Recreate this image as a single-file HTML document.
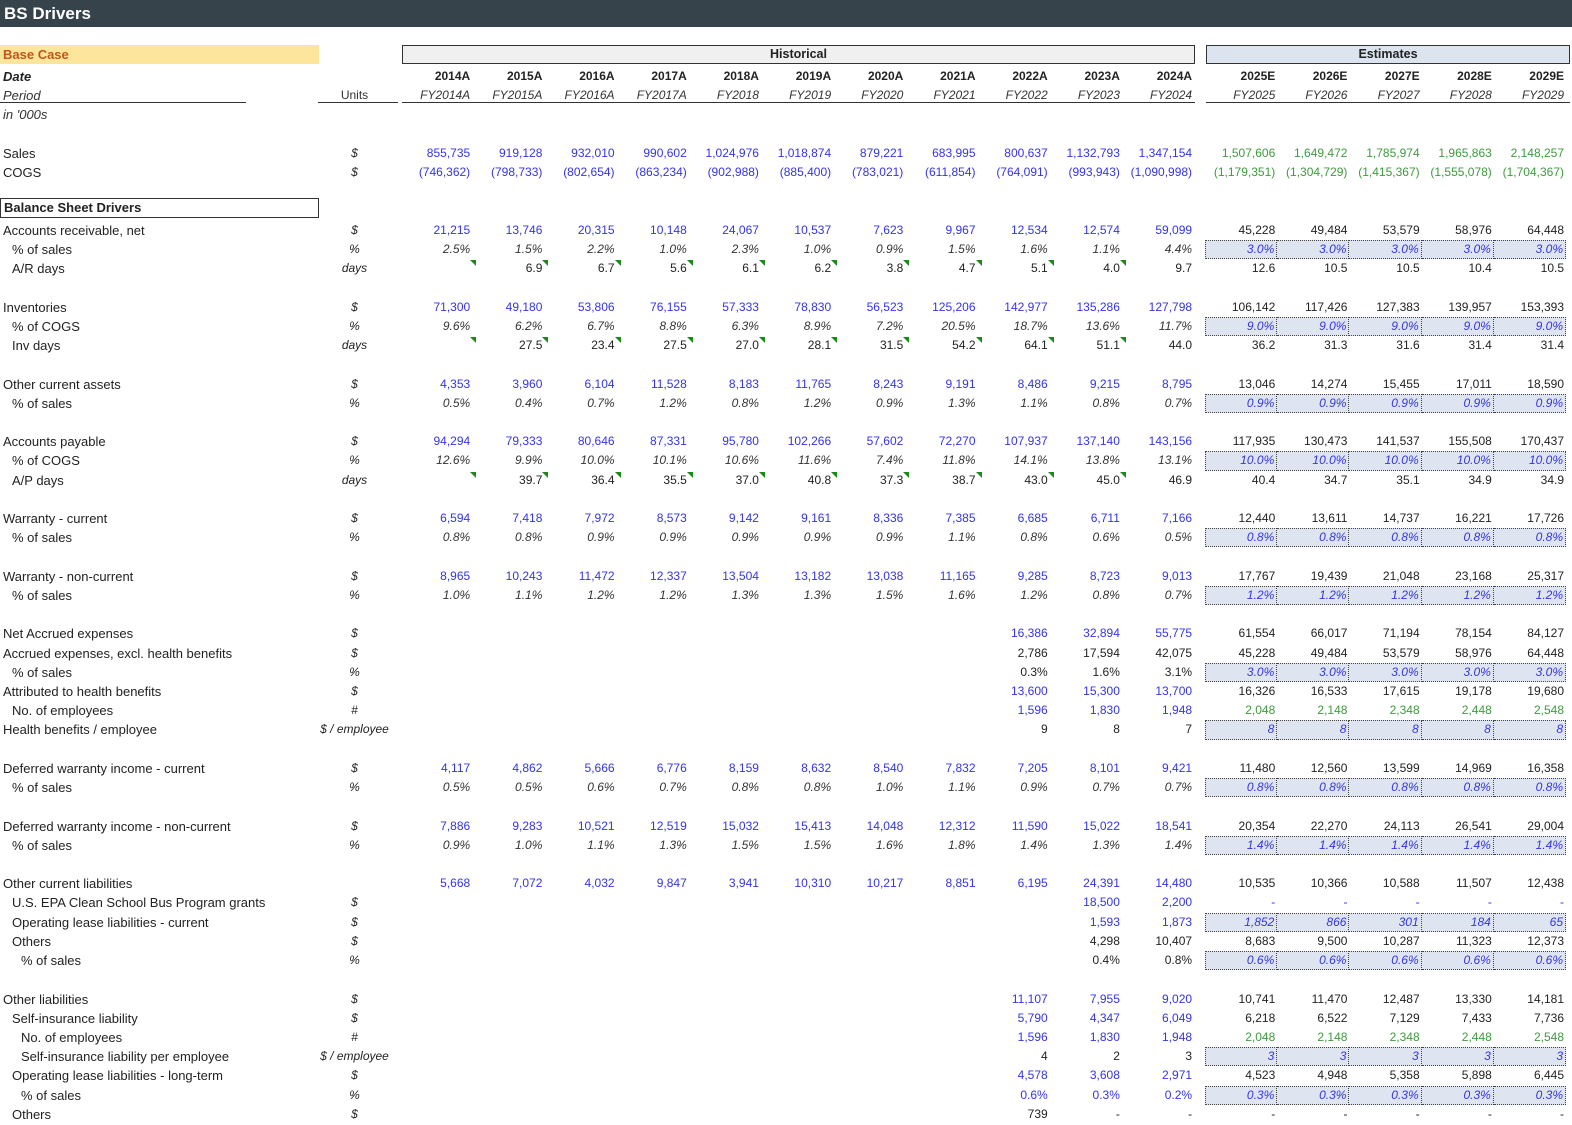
<!DOCTYPE html>
<html><head><meta charset="utf-8"><style>
*{margin:0;padding:0;box-sizing:border-box}
body{width:1572px;height:1125px;background:#fff;font-family:"Liberation Sans",sans-serif;font-size:12px;color:#222;position:relative;overflow:hidden}
.t{position:absolute;left:0;top:0;width:1572px;height:27px;background:#36434a;color:#fff;font-weight:bold;font-size:17px;line-height:27px;padding-left:4px}
.r{position:absolute;left:0;width:1572px;height:19.22px;line-height:19.22px;display:flex;white-space:nowrap;margin-top:2.5px}
.r>span{flex:none}
.l{width:309px;padding-left:3px;font-size:13px}
.l1{padding-left:12px}.l2{padding-left:21px}
.u{width:91px;text-align:center;font-style:italic}
.n{width:72.2px;text-align:right;padding-right:2px;position:relative}
.sp{width:11px}
.b{color:#3434e6}.g{color:#3f9a3f}.i{font-style:italic;color:#333}
.k{background:#dee5f0;border:1px dotted #444;border-left:none;font-style:italic;color:#3434e6;line-height:17px}
.k0{border-left:1px dotted #444}
.tr::after{content:"";position:absolute;right:-4px;top:1px;border-top:6px solid #1a8a1a;border-left:6px solid transparent}
.box{position:absolute;height:19px;border:1.5px solid #333;font-weight:bold;text-align:center;line-height:17px;font-size:12.5px}
.ul{position:absolute;height:1.5px;background:#333;top:101.5px}
</style></head><body>
<div class="t">BS Drivers</div>
<div style="position:absolute;left:0;top:45px;width:319px;height:19px;background:#fde59c;color:#c2561a;font-weight:bold;font-size:13px;line-height:20px;padding-left:3px">Base Case</div>
<div class="box" style="left:402px;top:45px;width:793px;background:#f0f0f0">Historical</div>
<div class="box" style="left:1206px;top:45px;width:364px;background:#dce4ef">Estimates</div>
<div class="ul" style="left:0;width:246px"></div>
<div class="ul" style="left:318px;width:80px"></div>
<div class="ul" style="left:402px;width:793px"></div>
<div class="ul" style="left:1206px;width:364px"></div>
<div class="box" style="left:0;top:198px;width:319px;height:20px;text-align:left;padding-left:3px;line-height:18px;font-size:13px">Balance Sheet Drivers</div>

<div class="r" style="top:64.4px;font-weight:bold"><span class="l" style="font-style:italic">Date</span><span class="u"></span><span class="n">2014A</span><span class="n">2015A</span><span class="n">2016A</span><span class="n">2017A</span><span class="n">2018A</span><span class="n">2019A</span><span class="n">2020A</span><span class="n">2021A</span><span class="n">2022A</span><span class="n">2023A</span><span class="n">2024A</span><span class="sp"></span><span class="n">2025E</span><span class="n">2026E</span><span class="n">2027E</span><span class="n">2028E</span><span class="n">2029E</span></div>
<div class="r i" style="top:83.6px"><span class="l">Period</span><span class="u" style="font-style:normal">Units</span><span class="n">FY2014A</span><span class="n">FY2015A</span><span class="n">FY2016A</span><span class="n">FY2017A</span><span class="n">FY2018</span><span class="n">FY2019</span><span class="n">FY2020</span><span class="n">FY2021</span><span class="n">FY2022</span><span class="n">FY2023</span><span class="n">FY2024</span><span class="sp"></span><span class="n">FY2025</span><span class="n">FY2026</span><span class="n">FY2027</span><span class="n">FY2028</span><span class="n">FY2029</span></div>
<div class="r i" style="top:102.8px"><span class="l">in '000s</span></div>

<div class="r" style="top:141.3px"><span class="l">Sales</span><span class="u">$</span><span class="n b">855,735</span><span class="n b">919,128</span><span class="n b">932,010</span><span class="n b">990,602</span><span class="n b">1,024,976</span><span class="n b">1,018,874</span><span class="n b">879,221</span><span class="n b">683,995</span><span class="n b">800,637</span><span class="n b">1,132,793</span><span class="n b">1,347,154</span><span class="sp"></span><span class="n g">1,507,606</span><span class="n g">1,649,472</span><span class="n g">1,785,974</span><span class="n g">1,965,863</span><span class="n g">2,148,257</span></div>
<div class="r" style="top:160.5px"><span class="l">COGS</span><span class="u">$</span><span class="n b">(746,362)</span><span class="n b">(798,733)</span><span class="n b">(802,654)</span><span class="n b">(863,234)</span><span class="n b">(902,988)</span><span class="n b">(885,400)</span><span class="n b">(783,021)</span><span class="n b">(611,854)</span><span class="n b">(764,091)</span><span class="n b">(993,943)</span><span class="n b">(1,090,998)</span><span class="sp"></span><span class="n g">(1,179,351)</span><span class="n g">(1,304,729)</span><span class="n g">(1,415,367)</span><span class="n g">(1,555,078)</span><span class="n g">(1,704,367)</span></div>

<div class="r" style="top:218.2px"><span class="l">Accounts receivable, net</span><span class="u">$</span><span class="n b">21,215</span><span class="n b">13,746</span><span class="n b">20,315</span><span class="n b">10,148</span><span class="n b">24,067</span><span class="n b">10,537</span><span class="n b">7,623</span><span class="n b">9,967</span><span class="n b">12,534</span><span class="n b">12,574</span><span class="n b">59,099</span><span class="sp"></span><span class="n">45,228</span><span class="n">49,484</span><span class="n">53,579</span><span class="n">58,976</span><span class="n">64,448</span></div>
<div class="r" style="top:237.4px"><span class="l l1">% of sales</span><span class="u">%</span><span class="n i">2.5%</span><span class="n i">1.5%</span><span class="n i">2.2%</span><span class="n i">1.0%</span><span class="n i">2.3%</span><span class="n i">1.0%</span><span class="n i">0.9%</span><span class="n i">1.5%</span><span class="n i">1.6%</span><span class="n i">1.1%</span><span class="n i">4.4%</span><span class="sp"></span><span class="n k k0">3.0%</span><span class="n k">3.0%</span><span class="n k">3.0%</span><span class="n k">3.0%</span><span class="n k">3.0%</span></div>
<div class="r" style="top:256.6px"><span class="l l1">A/R days</span><span class="u">days</span><span class="n tr"></span><span class="n tr">6.9</span><span class="n tr">6.7</span><span class="n tr">5.6</span><span class="n tr">6.1</span><span class="n tr">6.2</span><span class="n tr">3.8</span><span class="n tr">4.7</span><span class="n tr">5.1</span><span class="n tr">4.0</span><span class="n">9.7</span><span class="sp"></span><span class="n">12.6</span><span class="n">10.5</span><span class="n">10.5</span><span class="n">10.4</span><span class="n">10.5</span></div>

<div class="r" style="top:295.1px"><span class="l">Inventories</span><span class="u">$</span><span class="n b">71,300</span><span class="n b">49,180</span><span class="n b">53,806</span><span class="n b">76,155</span><span class="n b">57,333</span><span class="n b">78,830</span><span class="n b">56,523</span><span class="n b">125,206</span><span class="n b">142,977</span><span class="n b">135,286</span><span class="n b">127,798</span><span class="sp"></span><span class="n">106,142</span><span class="n">117,426</span><span class="n">127,383</span><span class="n">139,957</span><span class="n">153,393</span></div>
<div class="r" style="top:314.3px"><span class="l l1">% of COGS</span><span class="u">%</span><span class="n i">9.6%</span><span class="n i">6.2%</span><span class="n i">6.7%</span><span class="n i">8.8%</span><span class="n i">6.3%</span><span class="n i">8.9%</span><span class="n i">7.2%</span><span class="n i">20.5%</span><span class="n i">18.7%</span><span class="n i">13.6%</span><span class="n i">11.7%</span><span class="sp"></span><span class="n k k0">9.0%</span><span class="n k">9.0%</span><span class="n k">9.0%</span><span class="n k">9.0%</span><span class="n k">9.0%</span></div>
<div class="r" style="top:333.5px"><span class="l l1">Inv days</span><span class="u">days</span><span class="n tr"></span><span class="n tr">27.5</span><span class="n tr">23.4</span><span class="n tr">27.5</span><span class="n tr">27.0</span><span class="n tr">28.1</span><span class="n tr">31.5</span><span class="n tr">54.2</span><span class="n tr">64.1</span><span class="n tr">51.1</span><span class="n">44.0</span><span class="sp"></span><span class="n">36.2</span><span class="n">31.3</span><span class="n">31.6</span><span class="n">31.4</span><span class="n">31.4</span></div>

<div class="r" style="top:372px"><span class="l">Other current assets</span><span class="u">$</span><span class="n b">4,353</span><span class="n b">3,960</span><span class="n b">6,104</span><span class="n b">11,528</span><span class="n b">8,183</span><span class="n b">11,765</span><span class="n b">8,243</span><span class="n b">9,191</span><span class="n b">8,486</span><span class="n b">9,215</span><span class="n b">8,795</span><span class="sp"></span><span class="n">13,046</span><span class="n">14,274</span><span class="n">15,455</span><span class="n">17,011</span><span class="n">18,590</span></div>
<div class="r" style="top:391.2px"><span class="l l1">% of sales</span><span class="u">%</span><span class="n i">0.5%</span><span class="n i">0.4%</span><span class="n i">0.7%</span><span class="n i">1.2%</span><span class="n i">0.8%</span><span class="n i">1.2%</span><span class="n i">0.9%</span><span class="n i">1.3%</span><span class="n i">1.1%</span><span class="n i">0.8%</span><span class="n i">0.7%</span><span class="sp"></span><span class="n k k0">0.9%</span><span class="n k">0.9%</span><span class="n k">0.9%</span><span class="n k">0.9%</span><span class="n k">0.9%</span></div>

<div class="r" style="top:429.6px"><span class="l">Accounts payable</span><span class="u">$</span><span class="n b">94,294</span><span class="n b">79,333</span><span class="n b">80,646</span><span class="n b">87,331</span><span class="n b">95,780</span><span class="n b">102,266</span><span class="n b">57,602</span><span class="n b">72,270</span><span class="n b">107,937</span><span class="n b">137,140</span><span class="n b">143,156</span><span class="sp"></span><span class="n">117,935</span><span class="n">130,473</span><span class="n">141,537</span><span class="n">155,508</span><span class="n">170,437</span></div>
<div class="r" style="top:448.8px"><span class="l l1">% of COGS</span><span class="u">%</span><span class="n i">12.6%</span><span class="n i">9.9%</span><span class="n i">10.0%</span><span class="n i">10.1%</span><span class="n i">10.6%</span><span class="n i">11.6%</span><span class="n i">7.4%</span><span class="n i">11.8%</span><span class="n i">14.1%</span><span class="n i">13.8%</span><span class="n i">13.1%</span><span class="sp"></span><span class="n k k0">10.0%</span><span class="n k">10.0%</span><span class="n k">10.0%</span><span class="n k">10.0%</span><span class="n k">10.0%</span></div>
<div class="r" style="top:468px"><span class="l l1">A/P days</span><span class="u">days</span><span class="n tr"></span><span class="n tr">39.7</span><span class="n tr">36.4</span><span class="n tr">35.5</span><span class="n tr">37.0</span><span class="n tr">40.8</span><span class="n tr">37.3</span><span class="n tr">38.7</span><span class="n tr">43.0</span><span class="n tr">45.0</span><span class="n">46.9</span><span class="sp"></span><span class="n">40.4</span><span class="n">34.7</span><span class="n">35.1</span><span class="n">34.9</span><span class="n">34.9</span></div>

<div class="r" style="top:506.5px"><span class="l">Warranty  - current</span><span class="u">$</span><span class="n b">6,594</span><span class="n b">7,418</span><span class="n b">7,972</span><span class="n b">8,573</span><span class="n b">9,142</span><span class="n b">9,161</span><span class="n b">8,336</span><span class="n b">7,385</span><span class="n b">6,685</span><span class="n b">6,711</span><span class="n b">7,166</span><span class="sp"></span><span class="n">12,440</span><span class="n">13,611</span><span class="n">14,737</span><span class="n">16,221</span><span class="n">17,726</span></div>
<div class="r" style="top:525.7px"><span class="l l1">% of sales</span><span class="u">%</span><span class="n i">0.8%</span><span class="n i">0.8%</span><span class="n i">0.9%</span><span class="n i">0.9%</span><span class="n i">0.9%</span><span class="n i">0.9%</span><span class="n i">0.9%</span><span class="n i">1.1%</span><span class="n i">0.8%</span><span class="n i">0.6%</span><span class="n i">0.5%</span><span class="sp"></span><span class="n k k0">0.8%</span><span class="n k">0.8%</span><span class="n k">0.8%</span><span class="n k">0.8%</span><span class="n k">0.8%</span></div>

<div class="r" style="top:564.2px"><span class="l">Warranty  - non-current</span><span class="u">$</span><span class="n b">8,965</span><span class="n b">10,243</span><span class="n b">11,472</span><span class="n b">12,337</span><span class="n b">13,504</span><span class="n b">13,182</span><span class="n b">13,038</span><span class="n b">11,165</span><span class="n b">9,285</span><span class="n b">8,723</span><span class="n b">9,013</span><span class="sp"></span><span class="n">17,767</span><span class="n">19,439</span><span class="n">21,048</span><span class="n">23,168</span><span class="n">25,317</span></div>
<div class="r" style="top:583.4px"><span class="l l1">% of sales</span><span class="u">%</span><span class="n i">1.0%</span><span class="n i">1.1%</span><span class="n i">1.2%</span><span class="n i">1.2%</span><span class="n i">1.3%</span><span class="n i">1.3%</span><span class="n i">1.5%</span><span class="n i">1.6%</span><span class="n i">1.2%</span><span class="n i">0.8%</span><span class="n i">0.7%</span><span class="sp"></span><span class="n k k0">1.2%</span><span class="n k">1.2%</span><span class="n k">1.2%</span><span class="n k">1.2%</span><span class="n k">1.2%</span></div>

<div class="r" style="top:621.8px"><span class="l">Net Accrued expenses</span><span class="u">$</span><span class="n"></span><span class="n"></span><span class="n"></span><span class="n"></span><span class="n"></span><span class="n"></span><span class="n"></span><span class="n"></span><span class="n b">16,386</span><span class="n b">32,894</span><span class="n b">55,775</span><span class="sp"></span><span class="n">61,554</span><span class="n">66,017</span><span class="n">71,194</span><span class="n">78,154</span><span class="n">84,127</span></div>
<div class="r" style="top:641px"><span class="l">Accrued expenses, excl. health benefits</span><span class="u">$</span><span class="n"></span><span class="n"></span><span class="n"></span><span class="n"></span><span class="n"></span><span class="n"></span><span class="n"></span><span class="n"></span><span class="n">2,786</span><span class="n">17,594</span><span class="n">42,075</span><span class="sp"></span><span class="n">45,228</span><span class="n">49,484</span><span class="n">53,579</span><span class="n">58,976</span><span class="n">64,448</span></div>
<div class="r" style="top:660.2px"><span class="l l1">% of sales</span><span class="u">%</span><span class="n"></span><span class="n"></span><span class="n"></span><span class="n"></span><span class="n"></span><span class="n"></span><span class="n"></span><span class="n"></span><span class="n">0.3%</span><span class="n">1.6%</span><span class="n">3.1%</span><span class="sp"></span><span class="n k k0">3.0%</span><span class="n k">3.0%</span><span class="n k">3.0%</span><span class="n k">3.0%</span><span class="n k">3.0%</span></div>
<div class="r" style="top:679.5px"><span class="l">Attributed to health benefits</span><span class="u">$</span><span class="n"></span><span class="n"></span><span class="n"></span><span class="n"></span><span class="n"></span><span class="n"></span><span class="n"></span><span class="n"></span><span class="n b">13,600</span><span class="n b">15,300</span><span class="n b">13,700</span><span class="sp"></span><span class="n">16,326</span><span class="n">16,533</span><span class="n">17,615</span><span class="n">19,178</span><span class="n">19,680</span></div>
<div class="r" style="top:698.7px"><span class="l l1">No. of employees</span><span class="u">#</span><span class="n"></span><span class="n"></span><span class="n"></span><span class="n"></span><span class="n"></span><span class="n"></span><span class="n"></span><span class="n"></span><span class="n b">1,596</span><span class="n b">1,830</span><span class="n b">1,948</span><span class="sp"></span><span class="n g">2,048</span><span class="n g">2,148</span><span class="n g">2,348</span><span class="n g">2,448</span><span class="n g">2,548</span></div>
<div class="r" style="top:717.9px"><span class="l">Health benefits / employee</span><span class="u">$ / employee</span><span class="n"></span><span class="n"></span><span class="n"></span><span class="n"></span><span class="n"></span><span class="n"></span><span class="n"></span><span class="n"></span><span class="n">9</span><span class="n">8</span><span class="n">7</span><span class="sp"></span><span class="n k k0">8</span><span class="n k">8</span><span class="n k">8</span><span class="n k">8</span><span class="n k">8</span></div>

<div class="r" style="top:756.3px"><span class="l">Deferred warranty income - current</span><span class="u">$</span><span class="n b">4,117</span><span class="n b">4,862</span><span class="n b">5,666</span><span class="n b">6,776</span><span class="n b">8,159</span><span class="n b">8,632</span><span class="n b">8,540</span><span class="n b">7,832</span><span class="n b">7,205</span><span class="n b">8,101</span><span class="n b">9,421</span><span class="sp"></span><span class="n">11,480</span><span class="n">12,560</span><span class="n">13,599</span><span class="n">14,969</span><span class="n">16,358</span></div>
<div class="r" style="top:775.5px"><span class="l l1">% of sales</span><span class="u">%</span><span class="n i">0.5%</span><span class="n i">0.5%</span><span class="n i">0.6%</span><span class="n i">0.7%</span><span class="n i">0.8%</span><span class="n i">0.8%</span><span class="n i">1.0%</span><span class="n i">1.1%</span><span class="n i">0.9%</span><span class="n i">0.7%</span><span class="n i">0.7%</span><span class="sp"></span><span class="n k k0">0.8%</span><span class="n k">0.8%</span><span class="n k">0.8%</span><span class="n k">0.8%</span><span class="n k">0.8%</span></div>

<div class="r" style="top:814px"><span class="l">Deferred warranty income - non-current</span><span class="u">$</span><span class="n b">7,886</span><span class="n b">9,283</span><span class="n b">10,521</span><span class="n b">12,519</span><span class="n b">15,032</span><span class="n b">15,413</span><span class="n b">14,048</span><span class="n b">12,312</span><span class="n b">11,590</span><span class="n b">15,022</span><span class="n b">18,541</span><span class="sp"></span><span class="n">20,354</span><span class="n">22,270</span><span class="n">24,113</span><span class="n">26,541</span><span class="n">29,004</span></div>
<div class="r" style="top:833.2px"><span class="l l1">% of sales</span><span class="u">%</span><span class="n i">0.9%</span><span class="n i">1.0%</span><span class="n i">1.1%</span><span class="n i">1.3%</span><span class="n i">1.5%</span><span class="n i">1.5%</span><span class="n i">1.6%</span><span class="n i">1.8%</span><span class="n i">1.4%</span><span class="n i">1.3%</span><span class="n i">1.4%</span><span class="sp"></span><span class="n k k0">1.4%</span><span class="n k">1.4%</span><span class="n k">1.4%</span><span class="n k">1.4%</span><span class="n k">1.4%</span></div>

<div class="r" style="top:871.7px"><span class="l">Other current liabilities</span><span class="u"></span><span class="n b">5,668</span><span class="n b">7,072</span><span class="n b">4,032</span><span class="n b">9,847</span><span class="n b">3,941</span><span class="n b">10,310</span><span class="n b">10,217</span><span class="n b">8,851</span><span class="n b">6,195</span><span class="n b">24,391</span><span class="n b">14,480</span><span class="sp"></span><span class="n">10,535</span><span class="n">10,366</span><span class="n">10,588</span><span class="n">11,507</span><span class="n">12,438</span></div>
<div class="r" style="top:890.9px"><span class="l l1">U.S. EPA Clean School Bus Program grants</span><span class="u">$</span><span class="n"></span><span class="n"></span><span class="n"></span><span class="n"></span><span class="n"></span><span class="n"></span><span class="n"></span><span class="n"></span><span class="n"></span><span class="n b">18,500</span><span class="n b">2,200</span><span class="sp"></span><span class="n b">-</span><span class="n b">-</span><span class="n b">-</span><span class="n b">-</span><span class="n b">-</span></div>
<div class="r" style="top:910.1px"><span class="l l1">Operating lease liabilities - current</span><span class="u">$</span><span class="n"></span><span class="n"></span><span class="n"></span><span class="n"></span><span class="n"></span><span class="n"></span><span class="n"></span><span class="n"></span><span class="n"></span><span class="n b">1,593</span><span class="n b">1,873</span><span class="sp"></span><span class="n k k0">1,852</span><span class="n k">866</span><span class="n k">301</span><span class="n k">184</span><span class="n k">65</span></div>
<div class="r" style="top:929.3px"><span class="l l1">Others</span><span class="u">$</span><span class="n"></span><span class="n"></span><span class="n"></span><span class="n"></span><span class="n"></span><span class="n"></span><span class="n"></span><span class="n"></span><span class="n"></span><span class="n">4,298</span><span class="n">10,407</span><span class="sp"></span><span class="n">8,683</span><span class="n">9,500</span><span class="n">10,287</span><span class="n">11,323</span><span class="n">12,373</span></div>
<div class="r" style="top:948.5px"><span class="l l2">% of sales</span><span class="u">%</span><span class="n"></span><span class="n"></span><span class="n"></span><span class="n"></span><span class="n"></span><span class="n"></span><span class="n"></span><span class="n"></span><span class="n"></span><span class="n">0.4%</span><span class="n">0.8%</span><span class="sp"></span><span class="n k k0">0.6%</span><span class="n k">0.6%</span><span class="n k">0.6%</span><span class="n k">0.6%</span><span class="n k">0.6%</span></div>

<div class="r" style="top:987px"><span class="l">Other liabilities</span><span class="u">$</span><span class="n"></span><span class="n"></span><span class="n"></span><span class="n"></span><span class="n"></span><span class="n"></span><span class="n"></span><span class="n"></span><span class="n b">11,107</span><span class="n b">7,955</span><span class="n b">9,020</span><span class="sp"></span><span class="n">10,741</span><span class="n">11,470</span><span class="n">12,487</span><span class="n">13,330</span><span class="n">14,181</span></div>
<div class="r" style="top:1006.2px"><span class="l l1">Self-insurance liability</span><span class="u">$</span><span class="n"></span><span class="n"></span><span class="n"></span><span class="n"></span><span class="n"></span><span class="n"></span><span class="n"></span><span class="n"></span><span class="n b">5,790</span><span class="n b">4,347</span><span class="n b">6,049</span><span class="sp"></span><span class="n">6,218</span><span class="n">6,522</span><span class="n">7,129</span><span class="n">7,433</span><span class="n">7,736</span></div>
<div class="r" style="top:1025.4px"><span class="l l2">No. of employees</span><span class="u">#</span><span class="n"></span><span class="n"></span><span class="n"></span><span class="n"></span><span class="n"></span><span class="n"></span><span class="n"></span><span class="n"></span><span class="n b">1,596</span><span class="n b">1,830</span><span class="n b">1,948</span><span class="sp"></span><span class="n g">2,048</span><span class="n g">2,148</span><span class="n g">2,348</span><span class="n g">2,448</span><span class="n g">2,548</span></div>
<div class="r" style="top:1044.6px"><span class="l l2">Self-insurance liability per employee</span><span class="u">$ / employee</span><span class="n"></span><span class="n"></span><span class="n"></span><span class="n"></span><span class="n"></span><span class="n"></span><span class="n"></span><span class="n"></span><span class="n">4</span><span class="n">2</span><span class="n">3</span><span class="sp"></span><span class="n k k0">3</span><span class="n k">3</span><span class="n k">3</span><span class="n k">3</span><span class="n k">3</span></div>
<div class="r" style="top:1063.8px"><span class="l l1">Operating lease liabilities - long-term</span><span class="u">$</span><span class="n"></span><span class="n"></span><span class="n"></span><span class="n"></span><span class="n"></span><span class="n"></span><span class="n"></span><span class="n"></span><span class="n b">4,578</span><span class="n b">3,608</span><span class="n b">2,971</span><span class="sp"></span><span class="n">4,523</span><span class="n">4,948</span><span class="n">5,358</span><span class="n">5,898</span><span class="n">6,445</span></div>
<div class="r" style="top:1083px"><span class="l l2">% of sales</span><span class="u">%</span><span class="n"></span><span class="n"></span><span class="n"></span><span class="n"></span><span class="n"></span><span class="n"></span><span class="n"></span><span class="n"></span><span class="n b">0.6%</span><span class="n b">0.3%</span><span class="n b">0.2%</span><span class="sp"></span><span class="n k k0">0.3%</span><span class="n k">0.3%</span><span class="n k">0.3%</span><span class="n k">0.3%</span><span class="n k">0.3%</span></div>
<div class="r" style="top:1102.2px"><span class="l l1">Others</span><span class="u">$</span><span class="n"></span><span class="n"></span><span class="n"></span><span class="n"></span><span class="n"></span><span class="n"></span><span class="n"></span><span class="n"></span><span class="n">739</span><span class="n">-</span><span class="n">-</span><span class="sp"></span><span class="n">-</span><span class="n">-</span><span class="n">-</span><span class="n">-</span><span class="n">-</span></div>
</body></html>
